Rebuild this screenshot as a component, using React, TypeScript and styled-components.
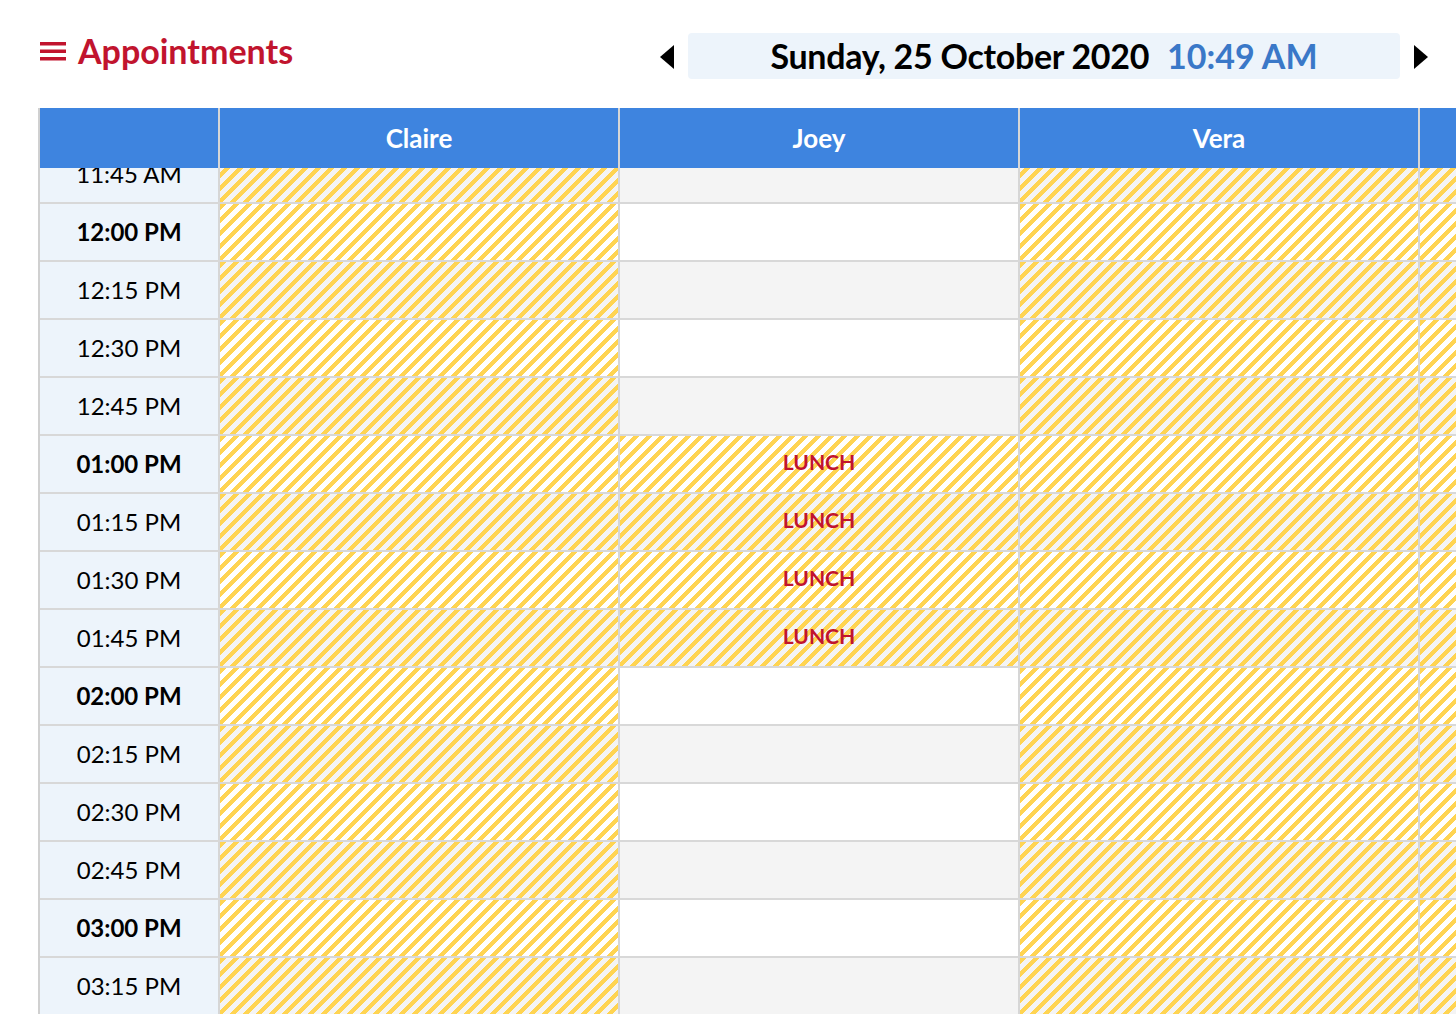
import React, { useLayoutEffect, useRef } from "react";
import styled, { createGlobalStyle } from "styled-components";

const GlobalStyle = createGlobalStyle`
  html, body {
    margin: 0;
    padding: 0;
    background: #ffffff;
    overflow: hidden;
  }
  body {
    font-family: Lato, "Open Sans", sans-serif;
    color: #000;
  }
`;

interface Staff {
  name: string;
  lunchOnly: boolean;
}

const staff: Staff[] = [
  { name: "Claire", lunchOnly: false },
  { name: "Joey", lunchOnly: true },
  { name: "Vera", lunchOnly: false },
  { name: "Zoe", lunchOnly: false },
];

const slots = [
  "11:45 AM",
  "12:00 PM",
  "12:15 PM",
  "12:30 PM",
  "12:45 PM",
  "01:00 PM",
  "01:15 PM",
  "01:30 PM",
  "01:45 PM",
  "02:00 PM",
  "02:15 PM",
  "02:30 PM",
  "02:45 PM",
  "03:00 PM",
  "03:15 PM",
  "03:30 PM",
  "03:45 PM",
];

const lunchSlots = ["01:00 PM", "01:15 PM", "01:30 PM", "01:45 PM"];

const App: React.FC = () => {
  const bodyRef = useRef<HTMLDivElement>(null);

  // the schedule pane is scrolled a little past 11:45
  useLayoutEffect(() => {
    if (bodyRef.current) {
      bodyRef.current.scrollTop = 22;
    }
  }, []);

  return (
    <>
      <GlobalStyle />
      <Page>
        <Header>
          <Title>
            <svg width="26" height="20" viewBox="0 0 26 20">
              <rect x="0" y="1" width="26" height="3.5" fill="#c1142e" />
              <rect x="0" y="8.5" width="26" height="3.5" fill="#c1142e" />
              <rect x="0" y="16" width="26" height="3.5" fill="#c1142e" />
            </svg>
            Appointments
          </Title>
          <DateNav>
            <Arrow>
              <svg width="14" height="24" viewBox="0 0 14 24">
                <polygon points="14,0 14,24 0,12" fill="#000" />
              </svg>
            </Arrow>
            <DateBox>
              <DateText>Sunday, 25 October 2020</DateText>
              <TimeText>10:49 AM</TimeText>
            </DateBox>
            <Arrow>
              <svg width="14" height="24" viewBox="0 0 14 24">
                <polygon points="0,0 0,24 14,12" fill="#000" />
              </svg>
            </Arrow>
          </DateNav>
        </Header>

        <Grid>
          <HeadRow>
            <HeadCell />
            {staff.map((s) => (
              <HeadCell key={s.name}>{s.name}</HeadCell>
            ))}
          </HeadRow>
          <Body ref={bodyRef}>
            {slots.map((slot, i) => {
              const odd = i % 2 === 0;
              const isLunch = lunchSlots.includes(slot);
              return (
                <Row key={slot}>
                  <TimeCell $hour={slot.includes(":00")}>{slot}</TimeCell>
                  {staff.map((s) => {
                    const blocked = !s.lunchOnly || isLunch;
                    return (
                      <SlotCell key={s.name} $odd={odd} $blocked={blocked}>
                        {s.lunchOnly && isLunch && <Lunch>LUNCH</Lunch>}
                      </SlotCell>
                    );
                  })}
                </Row>
              );
            })}
          </Body>
        </Grid>
      </Page>
    </>
  );
};

export default App;

const Page = styled.div`
  width: 1456px;
  height: 1014px;
  overflow: hidden;
  display: flex;
  flex-direction: column;
`;

const Header = styled.div`
  height: 108px;
  box-sizing: border-box;
  padding: 32px 28px 0 40px;
  display: flex;
  justify-content: space-between;
  align-items: flex-start;
`;

const Title = styled.h1`
  margin: -5px 0 0;
  height: 46px;
  display: flex;
  align-items: center;
  gap: 12px;
  font-size: 34px;
  font-weight: 700;
  color: #c1142e;

  svg {
    margin-top: 2px;
  }
`;

const DateNav = styled.div`
  display: flex;
  align-items: center;
  gap: 14px;
`;

const Arrow = styled.div`
  display: flex;
  align-items: center;
  height: 46px;
  padding-top: 2px;
`;

const DateBox = styled.div`
  width: 712px;
  height: 46px;
  box-sizing: border-box;
  background: #edf4fb;
  border-radius: 4px;
  display: flex;
  align-items: center;
  justify-content: center;
  gap: 18px;
  padding-bottom: 2px;
`;

const DateText = styled.span`
  font-size: 34px;
  font-weight: 700;
  color: #000;
  letter-spacing: -0.3px;
`;

const TimeText = styled.span`
  font-size: 34px;
  font-weight: 700;
  color: #3a78c8;
`;

const Grid = styled.div`
  flex: 1;
  min-height: 0;
  margin-left: 38px;
  border-left: 2px solid #d0d0d0;
  display: flex;
  flex-direction: column;
  width: 1782px;
`;

const HeadRow = styled.div`
  display: grid;
  grid-template-columns: 180px repeat(4, 400px);
  height: 60px;
  background: #3e84df;
`;

const HeadCell = styled.div`
  box-sizing: border-box;
  border-right: 2px solid #d6d6d6;
  display: flex;
  align-items: center;
  justify-content: center;
  color: #ffffff;
  font-size: 26px;
  font-weight: 700;
`;

const Body = styled.div`
  flex: 1;
  min-height: 0;
  overflow: hidden;
`;

const Row = styled.div`
  display: grid;
  grid-template-columns: 180px repeat(4, 400px);
  height: 58px;
  box-sizing: border-box;
  border-bottom: 2px solid #d8d8d8;
`;

const TimeCell = styled.div<{ $hour: boolean }>`
  box-sizing: border-box;
  border-right: 2px solid #d6d6d6;
  background: #edf4fb;
  display: flex;
  align-items: center;
  justify-content: center;
  font-size: 24px;
  font-weight: ${(p) => (p.$hour ? 700 : 400)};
  color: #000;
  padding-bottom: 2px;
`;

const SlotCell = styled.div<{ $odd: boolean; $blocked: boolean }>`
  box-sizing: border-box;
  border-right: 2px solid #d6d6d6;
  display: flex;
  align-items: center;
  justify-content: center;
  background: ${(p) => {
    const base = p.$odd ? "#f4f4f4" : "#ffffff";
    return p.$blocked
      ? `repeating-linear-gradient(135deg, #ffd452 0 4.5px, ${base} 4.5px 9.2px)`
      : base;
  }};
`;

const Lunch = styled.span`
  font-size: 21px;
  font-weight: 700;
  color: #c1142e;
  margin-top: -6px;
`;
